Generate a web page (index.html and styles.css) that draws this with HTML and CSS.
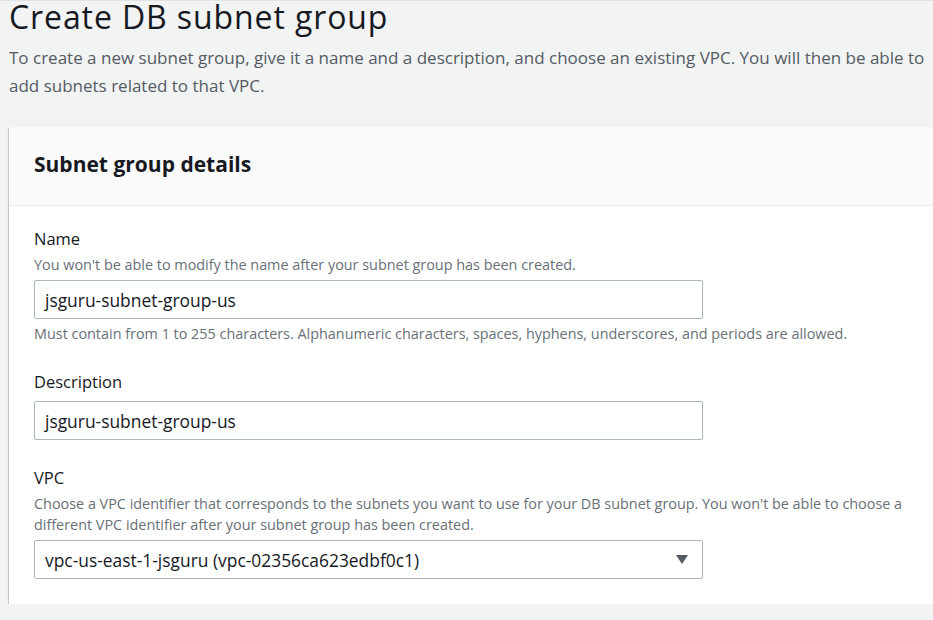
FILE: index.html
```html
<!DOCTYPE html>
<html>
<head>
<meta charset="utf-8">
<link rel="stylesheet" href="styles.css">
</head>
<body>
<div class="page">
  <h1 class="title">Create DB subnet group</h1>
  <p class="intro">To create a new subnet group, give it a name and a description, and choose an existing VPC. You will then be able to add subnets related to that VPC.</p>
  <section class="card">
    <header class="card-head"><h2>Subnet group details</h2></header>
    <div class="card-body">
      <div class="field">
        <div class="label">Name</div>
        <div class="hint">You won't be able to modify the name after your subnet group has been created.</div>
        <div class="input">jsguru-subnet-group-us</div>
        <div class="constraint">Must contain from 1 to 255 characters. Alphanumeric characters, spaces, hyphens, underscores, and periods are allowed.</div>
      </div>
      <div class="field">
        <div class="label">Description</div>
        <div class="input input-direct">jsguru-subnet-group-us</div>
      </div>
      <div class="field">
        <div class="label">VPC</div>
        <div class="hint">Choose a VPC identifier that corresponds to the subnets you want to use for your DB subnet group. You won't be able to choose a different VPC identifier after your subnet group has been created.</div>
        <div class="input select"><span>vpc-us-east-1-jsguru (vpc-02356ca623edbf0c1)</span><svg class="caret" width="12" height="9" viewBox="0 0 12 9"><path d="M0 0h12L6 9z" fill="#545b64"/></svg></div>
      </div>
    </div>
  </section>
</div>
</body>
</html>
```
FILE: styles.css
```css
html, body {
  margin: 0;
  padding: 0;
  background: #f2f3f3;
  overflow: hidden;
}
body {
  font-family: "Open Sans", "Noto Sans", sans-serif;
  color: #16191f;
  border-top: 1px solid #e1e3e3;
}
.page {
  padding: 0 0 0 9px;
}
.title {
  margin: 0;
  font-weight: 400;
  font-size: 32px;
  line-height: 32px;
  letter-spacing: 0.9px;
  color: #16191f;
}
.intro {
  margin: 11px 0 0 0;
  font-size: 17px;
  line-height: 28px;
  color: #545b64;
  padding-right: 4px;
}
.card {
  margin-top: 27px;
  margin-right: -20px;
  background: #fff;
  box-shadow: 0 1px 1px 0 rgba(0,28,36,0.3), 1px 1px 1px 0 rgba(0,28,36,0.15), -1px 1px 1px 0 rgba(0,28,36,0.15);
}
.card-head {
  background: #fafafa;
  border-bottom: 1px solid #eaeded;
  padding: 23px 25px 27px 25px;
}
.card-head h2 {
  margin: 0;
  font-size: 21px;
  line-height: 28px;
  font-weight: 700;
  color: #16191f;
}
.card-body {
  padding: 22px 25px 25px 25px;
  display: flex;
  flex-direction: column;
  gap: 27px;
}
.label {
  font-size: 16.5px;
  line-height: 22px;
  color: #16191f;
}
.hint, .constraint {
  margin-top: 4px;
  font-size: 14.4px;
  line-height: 21px;
  color: #687078;
}
.input {
  margin-top: 5px;
  box-sizing: border-box;
  width: 669px;
  height: 39px;
  border: 1px solid #aab7b8;
  border-radius: 2px;
  padding: 0 10px;
  display: flex;
  align-items: center;
  font-size: 17.4px;
  color: #16191f;
}
.input-direct {
  margin-top: 8px;
}
.select {
  justify-content: space-between;
  padding-right: 14px;
}
.caret {
  display: block;
}
```
